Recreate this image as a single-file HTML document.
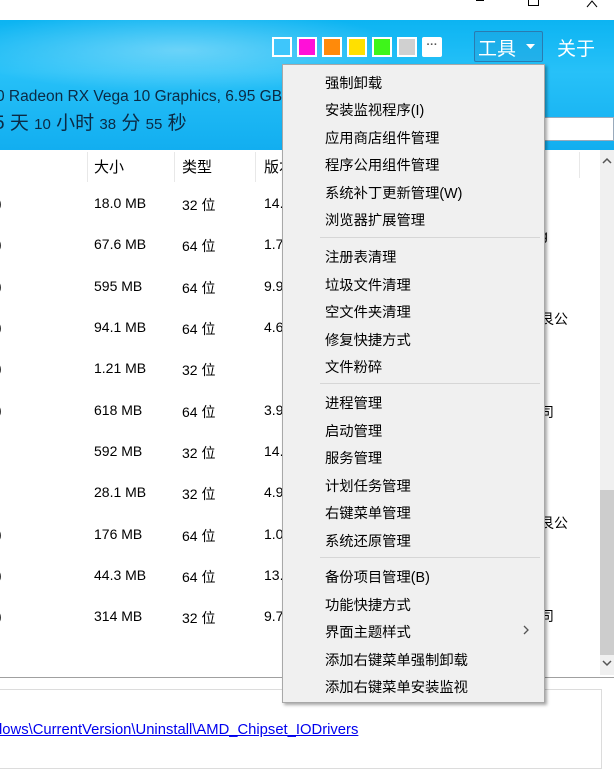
<!DOCTYPE html>
<html><head><meta charset="utf-8"><style>
*{margin:0;padding:0;box-sizing:border-box}
body{width:614px;height:760px;overflow:hidden;background:#fff;font-family:"Liberation Sans","Noto Sans CJK SC",sans-serif;position:relative;color:#000}
.a{position:absolute;white-space:nowrap}
.hdr{position:absolute;left:0;top:20px;width:614px;height:130px;background:radial-gradient(ellipse 320px 60px at 180px 30px,rgba(255,255,255,.35),rgba(255,255,255,0) 70%),linear-gradient(180deg,#0cb4f2 0%,#27c1f8 40%,#12aef0 100%)}
.sw{position:absolute;top:37px;width:20px;height:20px;border:2px solid #fff}
.t{font-size:14px;color:#000}
.mi{position:absolute;left:325px;font-size:14.3px;color:#000;white-space:nowrap}
.sep{position:absolute;left:320px;width:220px;height:1px;background:#d6d6d6}
</style></head><body>
<div class="a" style="left:476px;top:0;width:8px;height:1px;background:#000"></div>
<div class="a" style="left:528px;top:-2px;width:11px;height:8px;border:1px solid #000"></div>
<svg class="a" style="left:586px;top:0" width="12" height="8"><path d="M1 7 L6 1 L11 7" stroke="#000" fill="none"/></svg>
<div class="hdr"></div>
<div class="a" style="left:-4px;top:88px;font-size:15.5px;color:#0b2a44">0 Radeon RX Vega 10 Graphics, 6.95 GB</div>
<div class="a" style="left:-6px;top:108px;font-size:19px;color:#0b2a44">5 天 <span style="font-size:15px">10</span> 小时 <span style="font-size:15px">38</span> 分 <span style="font-size:15px">55</span> 秒</div>
<div class="sw" style="left:272px;background:#3ec6fb"></div>
<div class="sw" style="left:297px;background:#ff10d8"></div>
<div class="sw" style="left:322px;background:#ff8a0a"></div>
<div class="sw" style="left:347px;background:#ffe000"></div>
<div class="sw" style="left:372px;background:#3ef51a"></div>
<div class="sw" style="left:397px;background:#d0d0d0"></div>
<div class="sw" style="left:422px;background:#fff;border-radius:2px;font-size:11px;line-height:12px;text-align:center;color:#555;font-weight:bold">···</div>
<div class="a" style="left:474px;top:31px;width:69px;height:31px;border:1px solid #2a7bb0;background:rgba(40,140,200,.25);border-radius:2px"></div>
<div class="a" style="left:478px;top:34px;font-size:19px;color:#fff">工具</div>
<svg class="a" style="left:526px;top:44px" width="9" height="6"><path d="M0 0 L9 0 L4.5 5Z" fill="#fff"/></svg>
<div class="a" style="left:557px;top:34px;font-size:19px;color:#fff">关于</div>
<div class="a" style="left:540px;top:117px;width:74px;height:24px;background:#fff;border:1px solid #9ab"></div>
<div class="a" style="left:87px;top:152px;width:1px;height:30px;background:#e8e8e8"></div>
<div class="a" style="left:174px;top:152px;width:1px;height:30px;background:#e8e8e8"></div>
<div class="a" style="left:255px;top:152px;width:1px;height:30px;background:#e8e8e8"></div>
<div class="a" style="left:579px;top:152px;width:1px;height:26px;background:#e8e8e8"></div>
<div class="a" style="left:94px;top:156px;font-size:15px">大小</div>
<div class="a" style="left:182px;top:156px;font-size:15px">类型</div>
<div class="a" style="left:264px;top:156px;font-size:15px">版本</div>
<div class="a" style="left:600px;top:150px;width:14px;height:525px;background:#f0f0f0"></div>
<div class="a" style="left:600px;top:490px;width:14px;height:165px;background:#cdcdcd"></div>
<svg class="a" style="left:601px;top:157px" width="12" height="8"><path d="M2 6 L6 2 L10 6" stroke="#555" stroke-width="1.5" fill="none"/></svg>
<svg class="a" style="left:601px;top:659px" width="12" height="8"><path d="M2 2 L6 6 L10 2" stroke="#555" stroke-width="1.5" fill="none"/></svg>
<div class="a t" style="left:-3px;top:195px">)</div><div class="a t" style="left:94px;top:195px">18.0 MB</div><div class="a t" style="left:182px;top:195px">32 位</div><div class="a t" style="left:264px;top:195px">14.</div>
<div class="a t" style="left:-3px;top:236px">)</div><div class="a t" style="left:94px;top:236px">67.6 MB</div><div class="a t" style="left:182px;top:236px">64 位</div><div class="a t" style="left:264px;top:236px">1.7</div>
<div class="a t" style="left:-3px;top:278px">)</div><div class="a t" style="left:94px;top:278px">595 MB</div><div class="a t" style="left:182px;top:278px">64 位</div><div class="a t" style="left:264px;top:278px">9.9</div>
<div class="a t" style="left:-3px;top:319px">)</div><div class="a t" style="left:94px;top:319px">94.1 MB</div><div class="a t" style="left:182px;top:319px">64 位</div><div class="a t" style="left:264px;top:319px">4.6</div>
<div class="a t" style="left:-3px;top:360px">)</div><div class="a t" style="left:94px;top:360px">1.21 MB</div><div class="a t" style="left:182px;top:360px">32 位</div>
<div class="a t" style="left:-3px;top:402px">)</div><div class="a t" style="left:94px;top:402px">618 MB</div><div class="a t" style="left:182px;top:402px">64 位</div><div class="a t" style="left:264px;top:402px">3.9</div>
<div class="a t" style="left:-7px;top:443px">i)</div><div class="a t" style="left:94px;top:443px">592 MB</div><div class="a t" style="left:182px;top:443px">32 位</div><div class="a t" style="left:264px;top:443px">14.</div>
<div class="a t" style="left:-7px;top:484px">i)</div><div class="a t" style="left:94px;top:484px">28.1 MB</div><div class="a t" style="left:182px;top:484px">32 位</div><div class="a t" style="left:264px;top:484px">4.9</div>
<div class="a t" style="left:-3px;top:526px">)</div><div class="a t" style="left:94px;top:526px">176 MB</div><div class="a t" style="left:182px;top:526px">64 位</div><div class="a t" style="left:264px;top:526px">1.0</div>
<div class="a t" style="left:-3px;top:567px">)</div><div class="a t" style="left:94px;top:567px">44.3 MB</div><div class="a t" style="left:182px;top:567px">64 位</div><div class="a t" style="left:264px;top:567px">13.</div>
<div class="a t" style="left:-3px;top:608px">)</div><div class="a t" style="left:94px;top:608px">314 MB</div><div class="a t" style="left:182px;top:608px">32 位</div><div class="a t" style="left:264px;top:608px">9.7</div>
<div class="a t" style="left:540px;top:227px">g</div>
<div class="a t" style="left:540px;top:309px">艮公</div>
<div class="a t" style="left:540px;top:402px">司</div>
<div class="a t" style="left:540px;top:513px">艮公</div>
<div class="a t" style="left:540px;top:606px">司</div>
<div class="a" style="left:0;top:677px;width:614px;height:1px;background:#a0a0a0"></div>
<div class="a" style="left:-2px;top:689px;width:604px;height:80px;border:1px solid #dcdcdc"></div>
<div class="a" style="left:-1px;top:722px;font-size:14.8px;color:#0000ee;text-decoration:underline">lows\CurrentVersion\Uninstall\AMD_Chipset_IODrivers</div>
<div class="a" style="left:282px;top:64px;width:263px;height:639px;background:#f0f0f0;border:1px solid #a8a8a8;box-shadow:2px 2px 3px rgba(0,0,0,.35)"></div>
<div class="mi" style="top:72px">强制卸载</div>
<div class="mi" style="top:99px">安装监视程序(I)</div>
<div class="mi" style="top:127px">应用商店组件管理</div>
<div class="mi" style="top:154px">程序公用组件管理</div>
<div class="mi" style="top:182px">系统补丁更新管理(W)</div>
<div class="mi" style="top:209px">浏览器扩展管理</div>
<div class="sep" style="top:237px"></div>
<div class="mi" style="top:246px">注册表清理</div>
<div class="mi" style="top:274px">垃圾文件清理</div>
<div class="mi" style="top:301px">空文件夹清理</div>
<div class="mi" style="top:329px">修复快捷方式</div>
<div class="mi" style="top:356px">文件粉碎</div>
<div class="sep" style="top:383px"></div>
<div class="mi" style="top:392px">进程管理</div>
<div class="mi" style="top:420px">启动管理</div>
<div class="mi" style="top:447px">服务管理</div>
<div class="mi" style="top:475px">计划任务管理</div>
<div class="mi" style="top:502px">右键菜单管理</div>
<div class="mi" style="top:530px">系统还原管理</div>
<div class="sep" style="top:557px"></div>
<div class="mi" style="top:566px">备份项目管理(B)</div>
<div class="mi" style="top:594px">功能快捷方式</div>
<div class="mi" style="top:621px">界面主题样式</div>
<svg class="a" style="left:522px;top:625px" width="8" height="10"><path d="M2 1 L6 5 L2 9" stroke="#555" stroke-width="1.3" fill="none"/></svg>
<div class="mi" style="top:649px">添加右键菜单强制卸载</div>
<div class="mi" style="top:676px">添加右键菜单安装监视</div>
</body></html>
